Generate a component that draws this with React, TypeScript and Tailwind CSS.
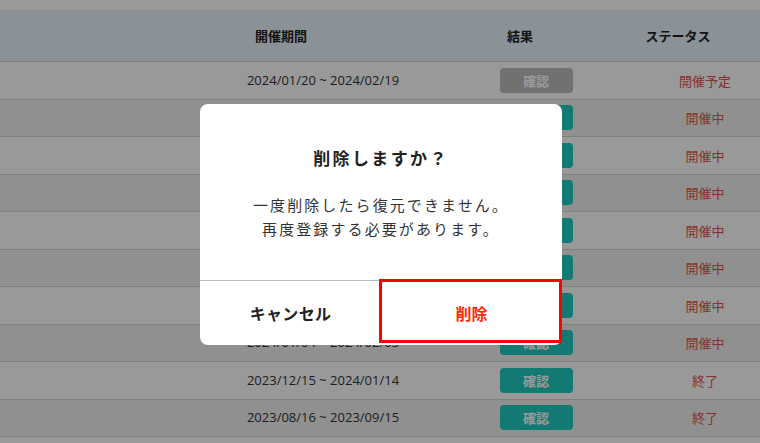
import React from 'react'

type Row = {
  period: string
  done: boolean
  status: string
}

const rows: Row[] = [
  { period: '2024/01/20 ~ 2024/02/19', done: false, status: '開催予定' },
  { period: '2024/01/15 ~ 2024/02/14', done: true, status: '開催中' },
  { period: '2024/01/12 ~ 2024/02/11', done: true, status: '開催中' },
  { period: '2024/01/10 ~ 2024/02/09', done: true, status: '開催中' },
  { period: '2024/01/08 ~ 2024/02/07', done: true, status: '開催中' },
  { period: '2024/01/06 ~ 2024/02/05', done: true, status: '開催中' },
  { period: '2024/01/05 ~ 2024/02/04', done: true, status: '開催中' },
  { period: '2024/01/04 ~ 2024/02/03', done: true, status: '開催中' },
  { period: '2023/12/15 ~ 2024/01/14', done: true, status: '終了' },
  { period: '2023/08/16 ~ 2023/09/15', done: true, status: '終了' },
]

const jp = { fontFamily: '"Noto Sans CJK JP", "Noto Sans", sans-serif' }
const latin = { fontFamily: '"Open Sans", "Noto Sans CJK JP", sans-serif' }

function TableHeader() {
  return (
    <div
      className="grid grid-cols-[180px_202px_98px_80px_58px_120px_22px] items-center h-[52px] bg-[#e6f4fc] border-b border-[#d2d8dc] text-[13px] font-bold text-[#222]"
      style={jp}
    >
      <span />
      <span className="text-center">開催期間</span>
      <span />
      <span className="text-center">結果</span>
      <span />
      <span className="text-center">ステータス</span>
      <span />
    </div>
  )
}

function TableRow({ row, index }: { row: Row; index: number }) {
  return (
    <div
      className={`grid grid-cols-[222px_202px_72px_80px_74px_110px] items-center h-[37.5px] border-b border-[#d6d6d6] ${
        index % 2 === 0 ? 'bg-white' : 'bg-[#f0f0f0]'
      }`}
    >
      <span />
      <span className="text-center text-[13px] text-[#333]" style={latin}>
        {row.period}
      </span>
      <span />
      <span className="flex justify-center">
        <button
          className={`w-[73px] h-[25px] rounded-[4px] text-[13px] font-bold text-white ${
            row.done ? 'bg-[#1fcbbf]' : 'bg-[#bdbdbd]'
          }`}
          style={jp}
        >
          確認
        </button>
      </span>
      <span />
      <span className="text-center text-[13px] text-[#e0504c]" style={jp}>
        {row.status}
      </span>
    </div>
  )
}

function ConfirmDialog() {
  return (
    <div className="fixed inset-0 bg-black/40 flex justify-center items-start pt-[104px] pl-[2px]">
      <div className="relative w-[362px] h-[241px] bg-white rounded-[8px] flex flex-col" style={jp}>
        <div className="flex-1 flex flex-col items-center">
          <h2 className="mt-[41px] text-[17px] font-bold tracking-[0.14em] text-[#222] leading-[26px]">
            削除しますか？
          </h2>
          <p className="mt-[22px] text-[15px] tracking-[0.14em] leading-[24px] text-[#333] text-center">
            一度削除したら復元できません。
            <br />
            再度登録する必要があります。
          </p>
        </div>
        <div className="h-[65px] border-t border-[#bcbcbc] grid grid-cols-2">
          <button className="text-[16px] font-bold text-[#222] tracking-[0.02em]">キャンセル</button>
          <button className="text-[16px] font-bold text-[#ff2a00]">削除</button>
        </div>
        {/* highlight box */}
        <div className="absolute left-[179px] top-[175px] w-[183px] h-[64px] border-[3px] border-[#ff0000] pointer-events-none" />
      </div>
    </div>
  )
}

export default function App() {
  return (
    <div className="relative w-[760px] h-[443px] overflow-hidden bg-white">
      <div className="h-[10px] bg-white shadow-[0_1px_3px_rgba(0,0,0,0.25)]" />
      <TableHeader />
      <div>
        {rows.map((row, i) => (
          <TableRow key={i} row={row} index={i} />
        ))}
        <div className="h-[37.5px] bg-white" />
      </div>
      <ConfirmDialog />
    </div>
  )
}
